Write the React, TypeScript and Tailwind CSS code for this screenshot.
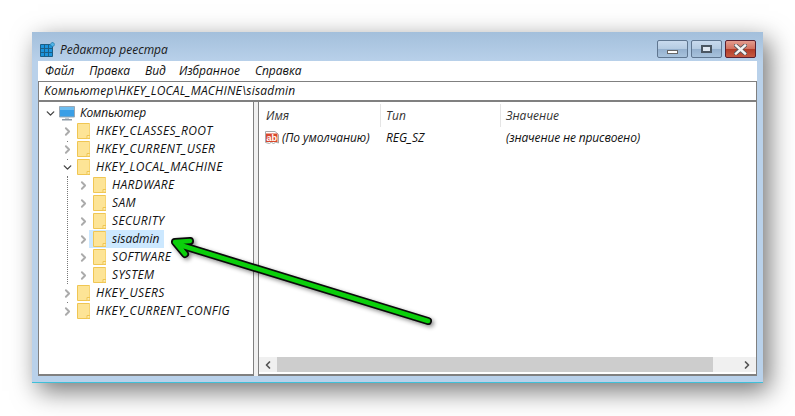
import { ChevronDown, ChevronRight } from "lucide-react"

const tree = [
  { name: "HKEY_CLASSES_ROOT", depth: 1 },
  { name: "HKEY_CURRENT_USER", depth: 1 },
  { name: "HKEY_LOCAL_MACHINE", depth: 1, open: true },
  { name: "HARDWARE", depth: 2 },
  { name: "SAM", depth: 2 },
  { name: "SECURITY", depth: 2 },
  { name: "sisadmin", depth: 2, selected: true },
  { name: "SOFTWARE", depth: 2 },
  { name: "SYSTEM", depth: 2 },
  { name: "HKEY_USERS", depth: 1 },
  { name: "HKEY_CURRENT_CONFIG", depth: 1 },
]

function Folder() {
  return (
    <svg width="13" height="16" viewBox="0 0 13 16" className="shrink-0">
      <path d="M.5.5h11.500q1 0 1 1V15.500H.5z" fill="#fde496" stroke="#f0c653" />
      <path d="M10 15.500v-3h3" fill="#fdeeb8" stroke="#f0c653" />
    </svg>
  )
}

function RegistryIcon() {
  return (
    <svg width="15" height="15" viewBox="0 0 15 15" className="shrink-0">
      <path d="M.5 2.500h12v12h-12z" fill="#1d94dc" stroke="#1c5f86" />
      <path d="M4.500 2.500v12M8.500 2.500v12M.5 6.500h12M.5 10.500h12" stroke="#1c5f86" />
      <path d="M12.500 0l2.500 2.500-2.500 2.500-2.500-2.500z" fill="#4fb4e8" stroke="#1c6f9a" strokeWidth="0.7" />
    </svg>
  )
}

function Computer() {
  return (
    <svg width="16" height="15" viewBox="0 0 16 15" className="shrink-0">
      <path d="M.5.5h15v10.500H.5z" fill="#3a9fe6" stroke="#9aa8b4" />
      <path d="M1 1h14v3H1z" fill="#6dbdf0" />
      <path d="M6 11.500h4V13H6z" fill="#c4ccd2" />
      <path d="M3 13h10v1.500H3z" fill="#8d9aa6" />
    </svg>
  )
}

function StringIcon() {
  return (
    <svg width="14" height="14" viewBox="0 0 14 14" className="shrink-0">
      <path d="M.5.5h9.500l3.500 3v8.500l-3-1-2 2-2-2-2 1.500-4-1z" fill="#fff" stroke="#a8a8a8" />
      <path d="M1 2.500h11.500v8.500H1z" fill="#d9482c" />
      <text x="6.700" y="9.500" textAnchor="middle" fontSize="9" fontWeight="700" fontStyle="normal" fill="#fff" fontFamily="'Liberation Sans', sans-serif">ab</text>
    </svg>
  )
}

function Arrow() {
  return (
    <svg width="270" height="100" viewBox="0 0 270 100" className="absolute left-[168px] top-[235px] overflow-visible drop-shadow-[2px_2px_2px_rgba(0,0,0,0.45)]">
      <path d="M260 86 L12 10 M22 6 L7 7 L17 19" fill="none" stroke="#0a0a0a" strokeWidth="8" strokeLinecap="round" strokeLinejoin="round" />
      <path d="M260 86 L12 10 M22 6 L7 7 L17 19" fill="none" stroke="#0bcf0b" strokeWidth="4.500" strokeLinecap="round" strokeLinejoin="round" />
    </svg>
  )
}

export default function App() {
  return (
    <div className="relative h-[416px] w-[795px] overflow-hidden bg-white pl-8 pt-8 font-['Open_Sans',sans-serif] text-[12px] italic text-[#111]">
      <div className="flex h-[351px] w-[731px] flex-col border-b border-b-[#3fc0d8] bg-gradient-to-b from-[#a3bfdb] to-[#b9d1ea] to-[30px] px-[6px] pb-[6px] shadow-[6px_8px_24px_rgba(0,0,0,0.55)]">
        {/* Title bar */}
        <div className="flex h-[29px] shrink-0 items-center pl-[2px]">
          <div className="mt-[6px] mr-[5px]">
            <RegistryIcon />
          </div>
          <span className="mt-[6px] text-[#1a1a1a]">Редактор реестра</span>
          <div className="ml-auto mb-[3px] mr-[1px] flex gap-[3px] self-end">
            <div className="flex h-[18px] w-[31px] items-center justify-center rounded-[2px] border border-[#5f7690] bg-[linear-gradient(#c8daee_0%,#b4cbe2_50%,#94b0ce_51%,#a8c2dc_100%)]">
              <div className="mt-[5px] h-[4px] w-[11px] border border-[#666] bg-white" />
            </div>
            <div className="flex h-[18px] w-[31px] items-center justify-center rounded-[2px] border border-[#5f7690] bg-[linear-gradient(#c8daee_0%,#b4cbe2_50%,#94b0ce_51%,#a8c2dc_100%)]">
              <div className="h-[8px] w-[11px] border-2 border-[#4a5662] bg-[#dfe8f2]" />
            </div>
            <div className="flex h-[18px] w-[31px] items-center justify-center rounded-[2px] border border-[#5a2030] bg-[linear-gradient(#e49c8e_0%,#d0705e_50%,#b23c28_51%,#c65a42_100%)]">
              <svg width="13" height="11" viewBox="0 0 13 11">
                <path d="M2 1.500L11 9.500M11 1.500L2 9.500" stroke="#55555a" strokeWidth="4" strokeLinecap="square" />
                <path d="M2 1.500L11 9.500M11 1.500L2 9.500" stroke="#f4f4f4" strokeWidth="2.400" strokeLinecap="square" />
              </svg>
            </div>
          </div>
        </div>

        {/* Menu */}
        <div className="flex h-[20px] shrink-0 items-center gap-[15px] bg-white pl-[7px]">
          <span>Файл</span>
          <span>Правка</span>
          <span className="mr-[-2px]">Вид</span>
          <span>Избранное</span>
          <span>Справка</span>
        </div>

        {/* Address */}
        <div className="flex h-[21px] shrink-0 items-center border border-b-2 border-[#808080] bg-white pl-[5px] tracking-[0.2px]">
          Компьютер\HKEY_LOCAL_MACHINE\sisadmin
        </div>

        <div className="flex min-h-0 flex-1 bg-[#f0f0f0]">
          {/* Tree */}
          <div className="relative w-[216px] shrink-0 border border-t-0 border-b-2 border-[#808080] bg-white pt-[2px]">
            {/* dotted connector lines */}
            <div className="absolute left-[28px] top-[74px] h-[108px] border-l border-dotted border-[#777]" />
            <div className="absolute left-[28px] top-[39px] h-px w-px bg-[#777]" />
            <div className="absolute left-[28px] top-[57px] h-px w-px bg-[#777]" />
            <div className="absolute left-[28px] top-[200px] h-px w-px bg-[#777]" />
            <div className="flex h-[18px] items-center pl-[5px]">
              <ChevronDown size={13} strokeWidth={2.5} className="shrink-0 text-[#444]" />
              <div className="ml-[2px] mr-[5px]">
                <Computer />
              </div>
              <span className="tracking-[-0.2px]">Компьютер</span>
            </div>
            {tree.map((row) => (
              <div key={row.name} className={`relative flex h-[18px] items-center ${row.depth === 2 ? "pl-[38px]" : "pl-[22px]"}`}>
                {row.open ? (
                  <ChevronDown size={13} strokeWidth={2.5} className="mr-[3px] shrink-0 text-[#444]" />
                ) : (
                  <ChevronRight size={13} strokeWidth={3.5} className={`shrink-0 text-[#ababab] ${row.depth === 2 ? "mr-[-1px]" : "mr-[3px]"}`} />
                )}
                <div className={`flex h-[18px] items-center gap-[6px] ${row.depth === 2 ? "pl-[4px]" : ""} ${row.selected ? "bg-[#cce8ff] pr-[4px]" : "tracking-[0.35px]"}`}>
                  <Folder />
                  <span>{row.name}</span>
                </div>
              </div>
            ))}
          </div>

          {/* Values */}
          <div className="ml-[4px] flex min-w-0 flex-1 flex-col border border-t-0 border-b-2 border-[#808080] bg-white">
            <div className="flex h-[27px] shrink-0 items-start pl-[7px] pt-[2px] text-[#333]">
              <span className="w-[114px] leading-[23px]">Имя</span>
              <span className="w-[120px] border-l border-[#e5e5e5] pl-[5px] leading-[23px]">Тип</span>
              <span className="border-l border-[#e5e5e5] pl-[5px] leading-[23px]">Значение</span>
            </div>
            <div className="flex h-[18px] shrink-0 items-center pl-[6px]">
              <div className="flex w-[119px] items-center gap-[3px] tracking-[-0.1px]">
                <StringIcon />
                <span>(По умолчанию)</span>
              </div>
              <span className="w-[122px] pl-[2px]">REG_SZ</span>
              <span className="tracking-[-0.15px]">(значение не присвоено)</span>
            </div>
            <div className="mt-auto mb-[2px] flex h-[15px] shrink-0 items-center bg-[#f0f0f0] not-italic">
              <div className="flex h-full w-[18px] items-center justify-center">
                <ChevronRight size={12} strokeWidth={3.5} className="rotate-180 text-[#555]" />
              </div>
              <div className="h-full w-[436px] bg-[#cdcdcd]" />
              <div className="ml-auto flex h-full w-[18px] items-center justify-center">
                <ChevronRight size={12} strokeWidth={3.5} className="text-[#555]" />
              </div>
            </div>
          </div>
        </div>
      </div>
      <Arrow />
    </div>
  )
}
